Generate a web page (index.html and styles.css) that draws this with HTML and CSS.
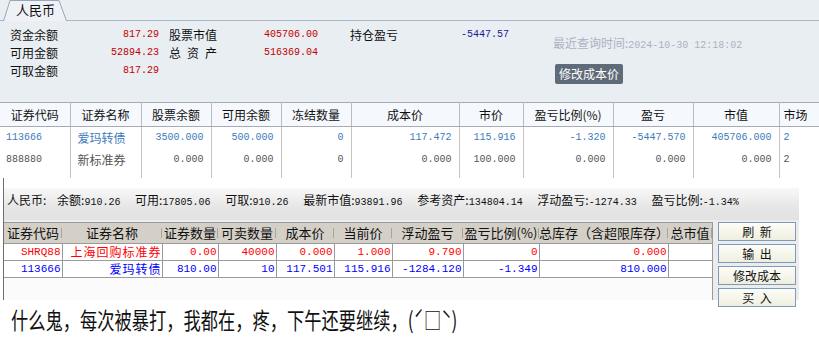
FILE: index.html
```html
<!DOCTYPE html>
<html lang="zh-CN">
<head>
    <meta charset="UTF-8">
    <title>资金持仓</title>
    <link rel="stylesheet" href="styles.css">
</head>
<body>
    <div class="top">
        <div class="tabbar">
            <div class="tab">
                <svg class="tab-shape" width="64" height="21" viewBox="0 0 64 21">
                    <path d="M0.5 21 L7 0.5 L56 0.5 L63.5 21" fill="#eef2f6" stroke="#98a6b8"/>
                </svg>
                <span class="tab-label">人民币</span>
            </div>
        </div>

        <div class="summary">
            <div class="fund">
                <span class="lbl">资金余额</span><span class="val">817.29</span><span></span>
                <span class="lbl">股票市值</span><span class="val left">405706.00</span>
                <span class="lbl">持仓盈亏</span><span class="val left loss">-5447.57</span>

                <span class="lbl">可用金额</span><span class="val">52894.23</span><span></span>
                <span class="lbl"><span class="spread">总 资 产</span></span><span class="val left">516369.04</span>
                <span></span><span></span>

                <span class="lbl">可取金额</span><span class="val">817.29</span><span></span>
                <span></span><span></span><span></span><span></span>
            </div>
            <div class="query">
                <p class="time">最近查询时间:<span class="num">2024-10-30 12:18:02</span></p>
                <button class="btn-cost">修改成本价</button>
            </div>
        </div>

        <table class="pos">
            <colgroup>
                <col style="width:70px"><col style="width:71px"><col style="width:70px"><col style="width:70px">
                <col style="width:70px"><col style="width:108px"><col style="width:64px"><col style="width:90px">
                <col style="width:80px"><col style="width:86px"><col style="width:60px">
            </colgroup>
            <thead>
                <tr>
                    <th>证券代码</th><th>证券名称</th><th>股票余额</th><th>可用余额</th><th>冻结数量</th>
                    <th>成本价</th><th>市价</th><th>盈亏比例(%)</th><th>盈亏</th><th>市值</th><th class="cut">市场</th>
                </tr>
            </thead>
            <tbody>
                <tr class="hold">
                    <td class="code">113666</td><td class="name">爱玛转债</td><td>3500.000</td><td>500.000</td><td>0</td>
                    <td>117.472</td><td>115.916</td><td>-1.320</td><td>-5447.570</td><td>405706.000</td><td class="mkt">2</td>
                </tr>
                <tr class="idle">
                    <td class="code">888880</td><td class="name">新标准券</td><td>0.000</td><td>0.000</td><td>0</td>
                    <td>0.000</td><td>100.000</td><td>0.000</td><td>0.000</td><td>0.000</td><td class="mkt">2</td>
                </tr>
                <tr class="blank">
                    <td></td><td></td><td></td><td></td><td></td><td></td><td></td><td></td><td></td><td></td><td></td>
                </tr>
            </tbody>
        </table>
    </div>

    <div class="bottom">
        <div class="status">
            <span class="cur">人民币:</span>
            <span class="item">余额:<b>910.26</b></span>
            <span class="item">可用:<b>17805.06</b></span>
            <span class="item">可取:<b>910.26</b></span>
            <span class="item">最新市值:<b>93891.96</b></span>
            <span class="item">参考资产:<b>134804.14</b></span>
            <span class="item">浮动盈亏:<b>-1274.33</b></span>
            <span class="item">盈亏比例:<b>-1.34%</b></span>
        </div>
        <div class="main">
            <div class="grid-wrap">
                <table class="grid">
                    <colgroup>
                        <col style="width:58px"><col style="width:100px"><col style="width:56px"><col style="width:58px">
                        <col style="width:58px"><col style="width:58px"><col style="width:71px"><col style="width:76px">
                        <col style="width:129px"><col style="width:44px">
                    </colgroup>
                    <thead>
                        <tr>
                            <th>证券代码</th><th>证券名称</th><th>证券数量</th><th>可卖数量</th><th>成本价</th>
                            <th>当前价</th><th>浮动盈亏</th><th>盈亏比例(%)</th><th>总库存（含超限库存）</th><th>总市值</th>
                        </tr>
                    </thead>
                    <tbody>
                        <tr class="repo">
                            <td>SHRQ88</td><td class="cn">上海回购标准券</td><td>0.00</td><td>40000</td><td>0.000</td>
                            <td>1.000</td><td>9.790</td><td>0</td><td>0.000</td><td></td>
                        </tr>
                        <tr class="bond">
                            <td>113666</td><td class="cn">爱玛转债</td><td>810.00</td><td>10</td><td>117.501</td>
                            <td>115.916</td><td>-1284.120</td><td>-1.349</td><td>810.000</td><td></td>
                        </tr>
                    </tbody>
                </table>
            </div>
            <div class="actions">
                <button class="act">刷&nbsp;&nbsp;新</button>
                <button class="act">输&nbsp;&nbsp;出</button>
                <button class="act">修改成本</button>
                <button class="act">买&nbsp;&nbsp;入</button>
            </div>
        </div>
    </div>

    <p class="caption">什么鬼，每次被暴打，我都在，疼，下午还要继续，(ˊ□ˋ)</p>
</body>
</html>
```

FILE: styles.css
```css
* {
    margin: 0;
    padding: 0;
    box-sizing: border-box;
}

body {
    font-family: "Noto Sans CJK SC", sans-serif;
    font-size: 12px;
    color: #111;
    background: #fff;
    width: 819px;
    height: 353px;
    overflow: hidden;
}

/* upper window */

.top {
    height: 178px;
    background: #e9eef3;
    overflow: hidden;
}

.tabbar {
    height: 21px;
    border-bottom: 1px solid #a9b6c8;
    padding-left: 3px;
}

.tab {
    position: relative;
    width: 64px;
    height: 21px;
}

.tab-shape {
    position: absolute;
    left: 0;
    top: 0;
}

.tab-label {
    position: relative;
    display: block;
    padding-left: 13px;
    font-size: 13px;
    line-height: 20px;
    color: #111;
}

.summary {
    display: flex;
    height: 60px;
}

.fund {
    display: grid;
    grid-template-columns: 60px 89px 10px 95px 86px 111px 92px;
    grid-auto-rows: 18px;
    padding: 5px 0 0 10px;
    line-height: 18px;
}

.lbl {
    font-size: 12px;
    color: #111;
}

.spread {
    display: block;
    width: 48px;
    text-align: justify;
    text-align-last: justify;
}

.val {
    font-family: "Liberation Mono", monospace;
    font-size: 10px;
    color: #c40000;
    text-align: right;
}

.val.left {
    text-align: left;
}

.val.loss {
    color: #14199a;
}

.query {
    padding-top: 13px;
}

.time {
    line-height: 18px;
    color: #a9b3c1;
    font-size: 12px;
}

.time .num {
    font-family: "Liberation Mono", monospace;
    font-size: 10px;
}

.btn-cost {
    margin-top: 9px;
    margin-left: 2px;
    height: 20px;
    padding: 0 4px;
    border: none;
    border-radius: 2px;
    background: #5f6b78;
    color: #fff;
    font-family: "Noto Sans CJK SC", sans-serif;
    font-size: 12px;
    line-height: 20px;
}

.pos {
    margin-top: 21px;
    border-collapse: collapse;
    table-layout: fixed;
    width: 839px;
    background: #fff;
}

.pos th {
    height: 24px;
    background: #f5f9fd;
    border-top: 1px solid #a8acb2;
    border-bottom: 1px solid #a8acb2;
    border-right: 1px solid #b8bcc2;
    font-weight: normal;
    font-size: 12px;
    color: #111;
    text-align: center;
}

.pos th.cut {
    text-align: left;
    padding-left: 4px;
}

.pos td {
    height: 22px;
    border-right: 1px solid #c4c4c4;
    font-family: "Liberation Mono", monospace;
    font-size: 10px;
    text-align: right;
    padding-right: 7px;
    white-space: nowrap;
}

.pos td.code {
    text-align: left;
    padding-left: 6px;
}

.pos td.name {
    text-align: left;
    padding-left: 7px;
    font-family: "Noto Sans CJK SC", sans-serif;
    font-size: 12px;
}

.pos td.mkt {
    text-align: left;
    padding-left: 4px;
}

.pos .hold td {
    color: #3b7bbd;
}

.pos .idle td {
    color: #555;
}

/* lower window */

.bottom {
    height: 122px;
    margin-left: 3px;
    border-left: 1px solid #6e6e6e;
    padding-top: 10px;
}

.status {
    width: 795px;
    height: 32px;
    padding: 4px 0 0 3px;
    background: linear-gradient(#f8f8f8, #e6e6e6 60%, #e2e2e2);
    font-size: 12px;
    line-height: 16px;
    white-space: nowrap;
    color: #111;
}

.status .cur {
    margin-right: 8px;
}

.status .item {
    margin-right: 12px;
}

.status b {
    font-weight: normal;
    font-family: "Liberation Mono", monospace;
    font-size: 10px;
}

.main {
    display: flex;
    width: 795px;
    height: 80px;
    background: #ececec;
    padding-top: 2px;
}

.grid-wrap {
    width: 709px;
    background: #fbfbfb;
    border-top: 1px solid #9a9a9a;
    border-right: 1px solid #9a9a9a;
}

.grid {
    border-collapse: collapse;
    table-layout: fixed;
    width: 708px;
}

.grid th {
    height: 20px;
    background: #d4d0c8;
    border-bottom: 1px solid #9a9a9a;
    font-weight: normal;
    font-size: 13px;
    line-height: 18px;
    color: #111;
    text-align: center;
    white-space: nowrap;
    position: relative;
}

.grid th::after {
    content: "";
    position: absolute;
    right: 0;
    top: 5px;
    height: 10px;
    border-right: 1px solid #a8a49c;
}

.grid td {
    height: 17px;
    border-right: 1px solid #9a9a9a;
    border-bottom: 1px solid #9a9a9a;
    background: #fff;
    font-family: "Liberation Mono", monospace;
    font-size: 11px;
    line-height: 16px;
    text-align: right;
    padding-right: 1px;
    white-space: nowrap;
    overflow: hidden;
}

.grid td.cn {
    font-family: "Noto Sans CJK SC", sans-serif;
    font-size: 12px;
    letter-spacing: 1px;
    line-height: 16px;
    padding-right: 0;
}

.grid .repo td {
    color: #ff0000;
}

.grid .bond td {
    color: #0000ff;
}

.actions {
    display: flex;
    flex-direction: column;
    gap: 3px;
    margin-left: 5px;
}

.act {
    width: 78px;
    height: 19px;
    border: 1px solid #7d9cbd;
    background: linear-gradient(#fdfdf8, #eeeedf);
    font-family: "Noto Sans CJK SC", sans-serif;
    font-size: 12px;
    color: #111;
}

.act:nth-child(3) {
    height: 21px;
}

.caption {
    margin: 4px 0 0 11px;
    font-size: 23px;
    line-height: 30px;
    color: #111;
    white-space: nowrap;
    transform: scaleX(0.75);
    transform-origin: left center;
}
```
